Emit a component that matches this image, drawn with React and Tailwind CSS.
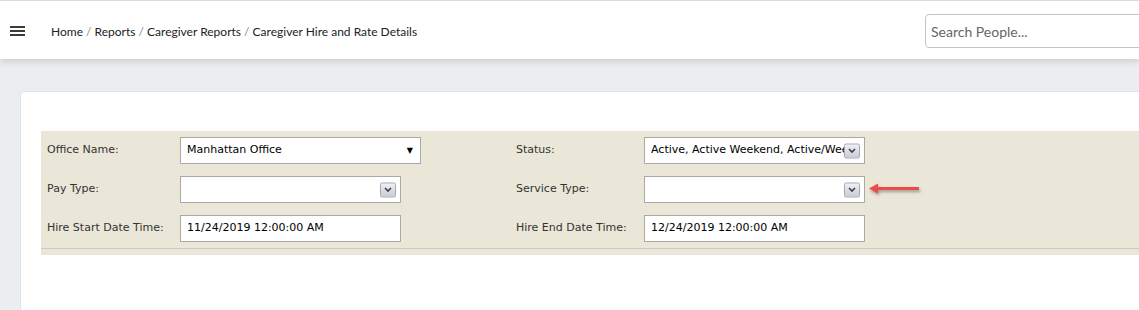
import React from "react";

const DropBtn = () => (
  <span className="absolute right-[4px] top-1/2 -translate-y-1/2 w-[16px] h-[15px] border border-[#a4a8b6] rounded-[2px] bg-gradient-to-b from-[#eef0f4] to-[#c9ccd8] flex items-center justify-center">
    <svg width="8" height="6" viewBox="0 0 8 6">
      <path d="M1 1.5 L4 4.5 L7 1.5" fill="none" stroke="#3a3f4c" strokeWidth="1.6" />
    </svg>
  </span>
);

function Field({ label, labelW, children }) {
  return (
    <div className="flex items-center">
      <div className={`${labelW} shrink-0 text-[#333]`}>{label}</div>
      {children}
    </div>
  );
}

function Box({ w, value, kind }) {
  return (
    <div className={`relative ${w} h-[27px] bg-white border border-[#a9a9a9] flex items-center pl-[6px] text-black whitespace-nowrap`}>
      {kind === "drop" ? (
        <span className="block w-[194px] overflow-hidden">{value}</span>
      ) : (
        <span>{value}</span>
      )}
      {kind === "drop" && <DropBtn />}
      {kind === "native" && (
        <span className="absolute right-[7px] top-[9px] text-[8px] leading-none">▼</span>
      )}
    </div>
  );
}

export default function App() {
  return (
    <div className="w-[1139px] h-[310px] overflow-hidden bg-[#ebeef1] font-['Lato',sans-serif]">
      <header className="relative z-10 h-[59px] bg-white border-t border-[#dcdcdc] shadow-[0_3px_6px_rgba(0,0,0,0.12)] flex items-center">
        <div className="pl-[10px] w-[51px] flex flex-col gap-[2px] mt-[2px]">
          <span className="block w-[15px] h-[2px] bg-[#3c3c32]" />
          <span className="block w-[15px] h-[2px] bg-[#3c3c32]" />
          <span className="block w-[15px] h-[2px] bg-[#3c3c32]" />
        </div>
        <nav className="text-[12px] text-[#222] mt-[3px]">
          Home <span className="text-[#888]">/</span> Reports <span className="text-[#888]">/</span> Caregiver Reports{" "}
          <span className="text-[#888]">/</span> Caregiver Hire and Rate Details
        </nav>
        <div className="ml-auto mr-[-20px] mt-[2px] w-[234px] h-[34px] border border-[#c5c5c5] rounded-[4px] flex items-center pl-[5px] text-[14px] text-[#666]">
          Search People...
        </div>
      </header>

      <div className="pt-[32px] pl-[20px]">
        <div className="w-[1140px] h-[240px] bg-white border border-[#dfe2e6] rounded-tl-[4px] pt-[39px] pl-[20px]">
          <div className="bg-[#ebe7d8] pb-[6px] font-['DejaVu_Sans',Verdana,sans-serif] text-[11px]">
            <div className="border-b border-[#c9c9c9] pt-[6px] pb-[6px] pl-[6px] flex flex-col gap-[12px]">
              <div className="flex">
                <Field label="Office Name:" labelW="w-[133px]">
                  <div className="w-[336px]">
                    <Box w="w-[241px]" value="Manhattan Office" kind="native" />
                  </div>
                </Field>
                <Field label="Status:" labelW="w-[128px]">
                  <Box w="w-[221px]" value="Active, Active Weekend, Active/Weekday" kind="drop" />
                </Field>
              </div>
              <div className="flex">
                <Field label="Pay Type:" labelW="w-[133px]">
                  <div className="w-[336px]">
                    <Box w="w-[221px]" value="" kind="drop" />
                  </div>
                </Field>
                <Field label="Service Type:" labelW="w-[128px]">
                  <Box w="w-[221px]" value="" kind="drop" />
                </Field>
                <svg width="58" height="16" viewBox="0 0 58 16" className="ml-[2px] mt-[6px]" style={{ filter: "drop-shadow(1px 2px 1.5px rgba(0,0,0,0.35))" }}>
                  <path d="M2 6.5 L11 1.5 L11 5 L52 5 L52 8 L11 8 L11 11.5 Z" fill="#ef4a4a" />
                </svg>
              </div>
              <div className="flex">
                <Field label="Hire Start Date Time:" labelW="w-[133px]">
                  <div className="w-[336px]">
                    <Box w="w-[221px]" value="11/24/2019 12:00:00 AM" />
                  </div>
                </Field>
                <Field label="Hire End Date Time:" labelW="w-[128px]">
                  <Box w="w-[221px]" value="12/24/2019 12:00:00 AM" />
                </Field>
              </div>
            </div>
          </div>
        </div>
      </div>
    </div>
  );
}
